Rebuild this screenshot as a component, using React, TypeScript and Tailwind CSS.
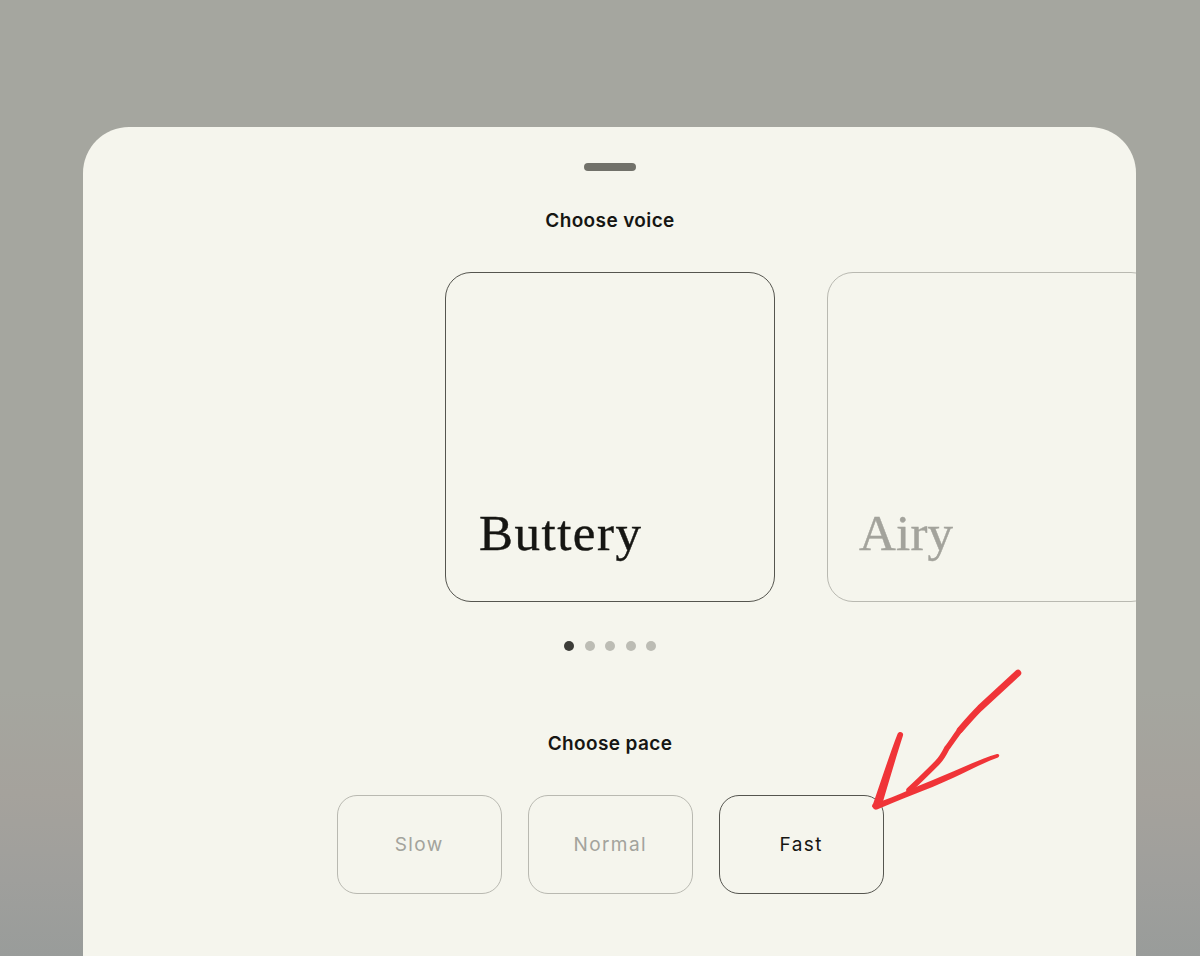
const sans = "font-['Inter','Noto_Sans',sans-serif]";

function VoiceCard({ name, active }: { name: string; active?: boolean }) {
  return (
    <div
      className={`flex h-[330px] w-[329.5px] shrink-0 items-end rounded-[26px] border pb-[38px] ${
        active ? "border-[#55554f] pl-[33px] text-[#161613]" : "border-[#b9b9b1] pl-[31px] text-[#a3a39c]"
      }`}
    >
      <span
        className={`font-['Liberation_Serif',serif] text-[51px] leading-[60px] [-webkit-text-stroke:0.4px_currentColor] ${
          active ? "tracking-[1.5px]" : "tracking-[0.2px]"
        }`}
      >
        {name}
      </span>
    </div>
  );
}

function PaceButton({ label, active }: { label: string; active?: boolean }) {
  return (
    <div
      className={`flex h-[99px] w-[165px] items-center justify-center rounded-[20px] border pt-[2px] text-[19px] tracking-[0.075em] ${sans} ${
        active ? "border-[#55554f] text-[#161613]" : "border-[#b9b9b1] text-[#a3a39c]"
      }`}
    >
      {label}
    </div>
  );
}

export default function App() {
  return (
    <div className="relative h-[956px] w-[1200px] overflow-hidden bg-[linear-gradient(to_bottom,#a5a69f_0%,#a5a69f_72%,#a5a29c_83%,#9f9f9c_92%,#999c9a_100%)]">
      <div className="ml-[83px] mt-[127px] flex h-[829px] w-[1053px] flex-col items-center overflow-hidden rounded-t-[46px] bg-[#f5f5ed] pt-[36px]">
        <div className="ml-[1px] h-[8px] w-[52px] rounded-full bg-[#71716a]" />
        <h2 className={`ml-[1px] mt-[36px] text-[19px] leading-[28px] font-semibold tracking-[0.02em] text-[#161613] ${sans}`}>
          Choose voice
        </h2>
        <div className="mt-[37px] flex w-full gap-[52.5px] pl-[362px]">
          <VoiceCard name="Buttery" active />
          <VoiceCard name="Airy" />
        </div>
        <div className="ml-[1px] mt-[39px] flex gap-[10.5px]">
          <span className="h-[10px] w-[10px] rounded-full bg-[#3c3c38]" />
          <span className="h-[10px] w-[10px] rounded-full bg-[#bcbcb4]" />
          <span className="h-[10px] w-[10px] rounded-full bg-[#bcbcb4]" />
          <span className="h-[10px] w-[10px] rounded-full bg-[#bcbcb4]" />
          <span className="h-[10px] w-[10px] rounded-full bg-[#bcbcb4]" />
        </div>
        <h2 className={`ml-[1px] mt-[79px] text-[19px] leading-[28px] font-semibold tracking-[0.02em] text-[#161613] ${sans}`}>
          Choose pace
        </h2>
        <div className="ml-[1.5px] mt-[37px] flex gap-[26px]">
          <PaceButton label="Slow" />
          <PaceButton label="Normal" />
          <PaceButton label="Fast" active />
        </div>
      </div>
      {/* red hand-drawn arrow on top */}
      <svg className="absolute left-[820px] top-[650px]" width="230" height="180" viewBox="0 0 230 180" fill="none">
        <g stroke="#f03438" strokeLinecap="round" strokeLinejoin="round">
          <path d="M198 23 L160 58 C152 66 146 73 140 80" strokeWidth="6.5" />
          <path d="M140 80 C134 88 131 93 127 98 C124 104 121 109 117 113 C108 122 98 132 89 140" strokeWidth="5.5" />
        </g>
        <path
          d="M77.5 84 C79 80.5 84 82 83 85.5 C77 104 70 128 62 155 L52 157 C60 134 69 106 77.5 84 Z"
          fill="#f03438"
        />
        <path
          d="M53 154 C66 150 78 145 90 139.5 C105 133 120 127 133 121.5 C148 115 163 108 177 104 C179.5 103.5 180 106.5 178 107.5 C163 113 148 121 134 127.5 C120 134 105 140 91 145.5 C79 150 68 155 57 159.5 C53 160.5 51 155.5 53 154 Z"
          fill="#f03438"
        />
      </svg>
    </div>
  );
}
